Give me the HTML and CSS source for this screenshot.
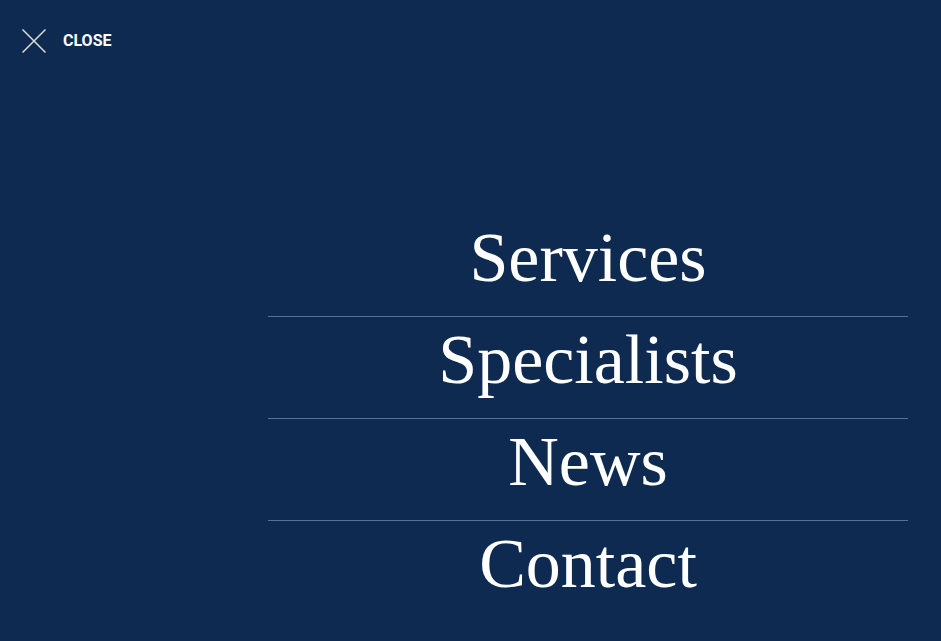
FILE: index.html
```html
<!DOCTYPE html>
<html lang="en">
<head>
<meta charset="utf-8">
<title>Menu</title>
<link rel="stylesheet" href="styles.css">
</head>
<body>
<div class="overlay">
  <header class="topbar">
    <button class="close-btn" type="button">
      <svg class="close-icon" width="24" height="24" viewBox="0 0 24 24" aria-hidden="true">
        <path d="M0.5 0.5 L23.5 23.5 M23.5 0.5 L0.5 23.5" stroke="#dcdcd4" stroke-width="1.5" fill="none"/>
      </svg>
      <span class="close-label">CLOSE</span>
    </button>
  </header>
  <nav class="menu">
    <a class="menu-item" href="#">Services</a>
    <a class="menu-item" href="#">Specialists</a>
    <a class="menu-item" href="#">News</a>
    <a class="menu-item" href="#">Contact</a>
  </nav>
</div>
</body>
</html>
```

FILE: styles.css
```css
html, body {
  margin: 0;
  padding: 0;
  height: 100%;
  background: #0e2a51;
}
.overlay {
  min-height: 100%;
  background: #0e2a51;
  overflow: hidden;
}
.topbar {
  padding: 29px 0 0 22px;
  height: 186px;
  box-sizing: border-box;
}
.close-btn {
  display: flex;
  align-items: center;
  gap: 17px;
  background: none;
  border: 0;
  padding: 0;
  cursor: pointer;
}
.close-icon {
  display: block;
  width: 24px;
  height: 24px;
}
.close-label {
  font-family: Roboto, "Liberation Sans", sans-serif;
  font-weight: 700;
  font-size: 16px;
  line-height: 24px;
  color: #ffffff;
  letter-spacing: 0;
}
.menu {
  display: flex;
  flex-direction: column;
  margin: 29px 33px 0 268px;
}
.menu-item {
  display: block;
  text-align: center;
  font-family: "Liberation Serif", "Times New Roman", serif;
  font-size: 70px;
  line-height: 80px;
  padding: 3px 0 18px;
  color: #ffffff;
  text-decoration: none;
}
.menu-item + .menu-item {
  border-top: 1px solid #5a7196;
}
```
